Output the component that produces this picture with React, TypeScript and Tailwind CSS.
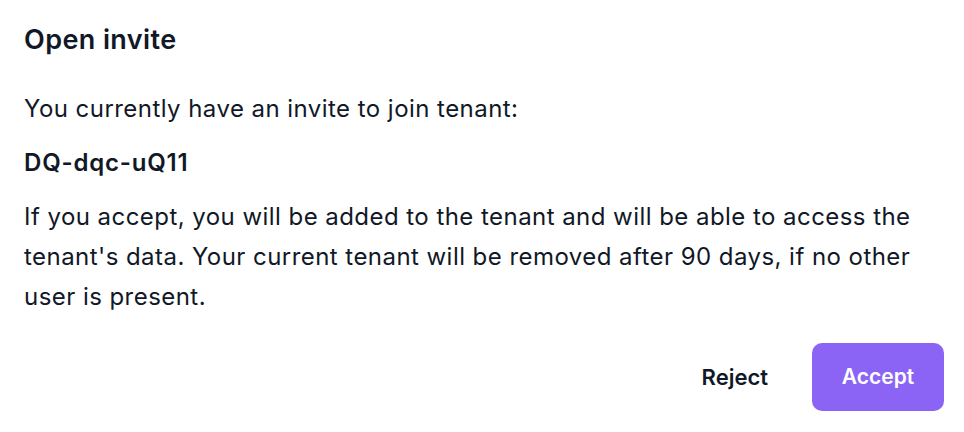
export default function App() {
  return (
    <div className="w-[964px] h-[432px] bg-white text-[#111827] pl-6 pr-5 pt-[21px]" style={{ fontFamily: '"Inter", "Open Sans", sans-serif' }}>
      <h2 className="text-[27px] leading-[38px] font-semibold tracking-[0.4px]">Open invite</h2>
      <div className="mt-[30px] text-[24px] leading-[40px] tracking-[0.45px]">
        <p>You currently have an invite to join tenant:</p>
        <p className="mt-[14px] font-semibold tracking-[0.8px]">DQ-dqc-uQ11</p>
        <p className="mt-[14px]">
          If you accept, you will be added to the tenant and will be able to access the
          <br />
          tenant's data. Your current tenant will be removed after 90 days, if no other
          <br />
          user is present.
        </p>
      </div>
      <div className="mt-[26px] flex justify-end items-center gap-[22px]">
        <button className="h-[68px] px-[22px] text-[22px] font-semibold">Reject</button>
        <button className="h-[68px] w-[132px] rounded-[10px] bg-[#8b63f5] text-white text-[21px] font-semibold">Accept</button>
      </div>
    </div>
  );
}
